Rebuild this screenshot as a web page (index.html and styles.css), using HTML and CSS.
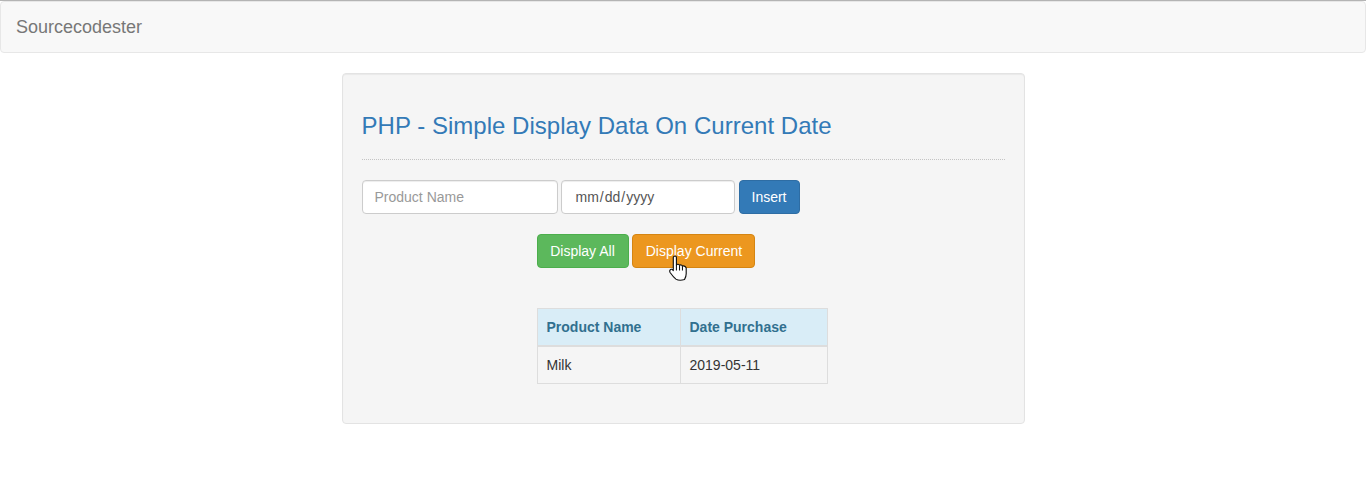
FILE: index.html
```html
<!DOCTYPE html>
<html lang="en">
<head>
<meta charset="utf-8">
<title>Sourcecodester</title>
<link rel="stylesheet" href="styles.css">
</head>
<body>
<nav class="navbar"><a class="brand" href="#">Sourcecodester</a></nav>
<main class="well">
  <h3 class="title">PHP - Simple Display Data On Current Date</h3>
  <hr class="rule">
  <form class="entry">
    <input class="control name" type="text" placeholder="Product Name">
    <input class="control date" type="date">
    <button class="btn btn-primary" type="button">Insert</button>
  </form>
  <section class="results">
    <div class="actions">
      <button class="btn btn-success" type="button">Display All</button>
      <span class="hover-wrap">
        <button class="btn btn-warning" type="button">Display Current</button>
        <svg class="cursor" width="19" height="26" viewBox="0 0 18 25" aria-hidden="true">
          <path d="M4.5 1.5C5.5 .5 7 1 7 2.5V9.5C7.6 8.6 9.6 8.6 10 10C10.7 9.2 12.4 9.4 12.8 10.8C13.6 10.2 15.6 10.6 16.4 12.5V18C16.4 20.5 15.6 22 14.8 23.6C12 24.5 8.5 24.4 6.5 23.2C4.5 21.5 2.5 19 .9 16.8C-.1 14.8 1.4 13 3.2 14L4 15V2.5C4 2.1 4.2 1.7 4.5 1.5Z" fill="#fff" stroke="#111" stroke-width="1.1" stroke-linejoin="round"/>
          <path d="M7 9.5V15M10 10V15M12.8 10.8V15" fill="none" stroke="#111" stroke-width="1"/>
        </svg>
      </span>
    </div>
    <table class="data">
      <thead>
        <tr><th class="col-name">Product Name</th><th class="col-date">Date Purchase</th></tr>
      </thead>
      <tbody>
        <tr><td>Milk</td><td>2019-05-11</td></tr>
      </tbody>
    </table>
  </section>
</main>
</body>
</html>
```
FILE: styles.css
```css
* { box-sizing: border-box; }
html, body { margin: 0; padding: 0; }
body {
  font-family: "Liberation Sans", Arial, sans-serif;
  font-size: 14px;
  line-height: 20px;
  color: #333;
  background: #fff;
  border-top: 1px solid #b4b4b4;
}
.navbar {
  height: 52px;
  margin-bottom: 20px;
  padding: 0 15px;
  display: flex;
  align-items: center;
  background: #f8f8f8;
  border: 1px solid #e7e7e7;
  border-radius: 4px;
}
.brand { font-size: 18px; color: #777; text-decoration: none; }
.well {
  width: 683px;
  margin: 0 auto;
  padding: 19px;
  background: #f5f5f5;
  border: 1px solid #e3e3e3;
  border-radius: 4px;
  box-shadow: inset 0 1px 1px rgba(0,0,0,.05);
}
.title {
  margin: 20px 0 20px;
  font-size: 24px;
  font-weight: 500;
  line-height: 26.4px;
  letter-spacing: .025px;
  color: #337ab7;
}
.rule { margin: 0 0 20px; border: 0; border-top: 1px dotted #c4c4c4; }
.entry { display: flex; align-items: center; }
.control {
  height: 34px;
  padding: 6px 12px;
  font: inherit;
  color: #555;
  background: #fff;
  border: 1px solid #ccc;
  border-radius: 4px;
  box-shadow: inset 0 1px 1px rgba(0,0,0,.075);
}
.control::placeholder { color: #999; }
.name { width: 196px; margin-right: 3px; }
.date { width: 174px; margin-right: 4px; padding-left: 13px; }
.date::-webkit-calendar-picker-indicator { display: none; }
.btn {
  height: 34px;
  padding: 6px 12px;
  font: inherit;
  color: #fff;
  border: 1px solid transparent;
  border-radius: 4px;
  white-space: nowrap;
}
.btn-primary { background: #337ab7; border-color: #2e6da4; }
.btn-success { background: #5cb85c; border-color: #4cae4c; width: 92px; }
.btn-warning { background: #ec971f; border-color: #d58512; display: block; width: 123px; padding: 6px 10px 6px 12px; }
.results { width: 291px; margin: 20px 0 20px 175px; }
.actions { display: flex; gap: 3px; margin-bottom: 40px; }
.hover-wrap { position: relative; display: block; }
.cursor { position: absolute; left: 37px; top: 21px; }
.data { width: 291px; border-collapse: collapse; table-layout: fixed; background: transparent; }
.data th, .data td { padding: 8px 8px 8px 9px; border: 1px solid #ddd; text-align: left; line-height: 20px; }
.data thead th { background: #d9edf7; color: #31708f; border-bottom-width: 2px; }
.col-name { width: 143px; }
```
